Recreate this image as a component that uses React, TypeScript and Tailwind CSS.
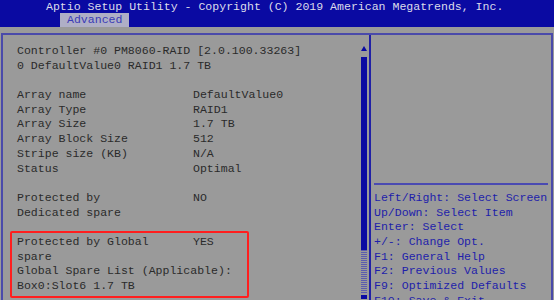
import React from "react";

type Row = { label?: string; value?: string };

const rows: Row[] = [
  { label: "Controller #0 PM8060-RAID [2.0.100.33263]" },
  { label: "0 DefaultValue0 RAID1 1.7 TB" },
  {},
  { label: "Array name", value: "DefaultValue0" },
  { label: "Array Type", value: "RAID1" },
  { label: "Array Size", value: "1.7 TB" },
  { label: "Array Block Size", value: "512" },
  { label: "Stripe size (KB)", value: "N/A" },
  { label: "Status", value: "Optimal" },
  {},
  { label: "Protected by", value: "NO" },
  { label: "Dedicated spare" },
  {},
  { label: "Protected by Global", value: "YES" },
  { label: "spare" },
  { label: "Global Spare List (Applicable):" },
  { label: "Box0:Slot6 1.7 TB" },
];

const help = [
  "Left/Right: Select Screen",
  "Up/Down: Select Item",
  "Enter: Select",
  "+/-: Change Opt.",
  "F1: General Help",
  "F2: Previous Values",
  "F9: Optimized Defaults",
  "F10: Save & Exit",
];

function ScrollBar() {
  return (
    <div className="w-[6px] mt-[11px] flex flex-col items-center">
      <svg width="6" height="5" viewBox="0 0 6 5">
        <polygon points="3,0 6,5 0,5" fill="#0a0aa2" />
      </svg>
      <div className="mt-[6px] w-[6px] h-[193px] bg-[#0a0aa2]" />
      <div className="w-[6px] h-[43px] bg-[repeating-linear-gradient(0deg,#5c5cae_0px,#5c5cae_1px,#9a9a9a_1px,#9a9a9a_2px)]" />
      <div className="mt-[2px] w-[6px] h-[4px] bg-[#0a0aa2]" />
    </div>
  );
}

export default function App() {
  return (
    <div className="w-[554px] h-[300px] overflow-hidden bg-[#9a9a9a] font-['Liberation_Mono',monospace] text-[11.55px] leading-[14.7px]">
      <div className="h-[27px] bg-[#0a0aa2] flex flex-col">
        <div className="h-[13px] leading-[13px] pl-[46px] text-[#dcdcea] whitespace-pre">
          Aptio Setup Utility - Copyright (C) 2019 American Megatrends, Inc.
        </div>
        <div className="pl-[60px]">
          <div className="w-[69px] h-[14px] leading-[14px] pl-[7px] bg-[#afafc6] text-[#3a3ab6]">
            Advanced
          </div>
        </div>
      </div>

      <div className="mt-[6px] ml-[1px] w-[552px] h-[280px] border-t-2 border-l-2 border-r-2 border-[#4a4aaa] flex">
        <div className="relative w-[366px] flex">
          <div className="flex-1 pl-[14px] pt-[9px] text-[#2a2a2a] whitespace-pre">
            {rows.map((r, i) => (
              <div key={i} className="h-[14.7px] flex">
                {r.value !== undefined ? (
                  <>
                    <span className="w-[176px]">{r.label}</span>
                    <span>{r.value}</span>
                  </>
                ) : (
                  <span>{r.label ?? ""}</span>
                )}
              </div>
            ))}
          </div>
          <ScrollBar />
          <div className="w-[2px]" />
          <div className="absolute left-[7px] top-[196px] w-[239px] h-[67px] border-2 border-[#ff1e1e] rounded-[2px]" />
        </div>
        <div className="w-[2px] bg-[#2020a6]" />
        <div className="flex-1 flex flex-col px-[3px]">
          <div className="h-[148px]" />
          <div className="h-[2px] bg-[#4a4ab2]" />
          <div className="pt-[6px] text-[#1e1eaa] whitespace-pre">
            {help.map((h) => (
              <div key={h} className="h-[14.7px]">
                {h}
              </div>
            ))}
          </div>
        </div>
      </div>
    </div>
  );
}
